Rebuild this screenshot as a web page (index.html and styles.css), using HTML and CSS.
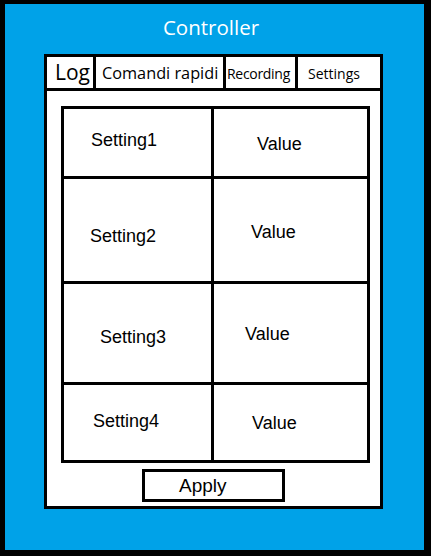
FILE: index.html
```html
<!DOCTYPE html>
<html lang="it">
<head>
  <meta charset="UTF-8" />
  <meta name="viewport" content="width=device-width, initial-scale=1" />
  <title>Controller</title>
  <link rel="stylesheet" href="styles.css">
</head>
<body>

  <div class="frame">
    <h1 class="title">Controller</h1>

    <div class="panel">
      <div class="tabs">
        <div class="tab tab-log">Log</div>
        <div class="tab tab-quick">Comandi rapidi</div>
        <div class="tab tab-rec">Recording</div>
        <div class="tab tab-settings">Settings</div>
      </div>

      <div class="settings-grid">
        <div class="cell c1">Setting1</div>
        <div class="cell c2">Value</div>
        <div class="cell c3">Setting2</div>
        <div class="cell c4">Value</div>
        <div class="cell c5">Setting3</div>
        <div class="cell c6">Value</div>
        <div class="cell c7">Setting4</div>
        <div class="cell c8">Value</div>
      </div>

      <button class="apply">Apply</button>
    </div>
  </div>

</body>
</html>
```

FILE: styles.css
```css
* {
  margin: 0;
  padding: 0;
  box-sizing: border-box;
}

body {
  background: #fff;
}

.frame {
  width: 431px;
  height: 556px;
  background: #00a2e8;
  border-style: solid;
  border-color: #000;
  border-width: 4px 7px 6px 5px;
}

.title {
  height: 50px;
  line-height: 46px;
  padding-right: 7px;
  text-align: center;
  color: #fff;
  font-family: 'Open Sans', sans-serif;
  font-size: 20.5px;
  font-weight: 400;
}

.panel {
  width: 339px;
  height: 455px;
  margin-left: 39px;
  background: #fff;
  border: 3px solid #000;
}

/* tab bar */
.tabs {
  display: flex;
  height: 34px;
  border-bottom: 3px solid #000;
}

.tab {
  height: 31px;
  line-height: 31px;
  border-right: 3px solid #000;
  font-family: 'Open Sans', sans-serif;
  color: #000;
  white-space: nowrap;
  overflow: hidden;
}

.tab-log {
  width: 49px;
  padding-left: 8px;
  font-size: 21px;
}

.tab-quick {
  width: 130px;
  padding-left: 6px;
  padding-top: 1px;
  font-size: 16.3px;
}

.tab-rec {
  width: 72px;
  padding-left: 1px;
  padding-top: 1px;
  font-size: 14px;
  letter-spacing: -0.3px;
}

.tab-settings {
  width: 82px;
  padding-left: 10px;
  padding-top: 1px;
  font-size: 14px;
  border-right: none;
}

/* settings table */
.settings-grid {
  display: grid;
  grid-template-columns: 147px 153px;
  grid-template-rows: 67px 102px 98px 75px;
  gap: 3px;
  padding: 3px;
  width: 309px;
  margin: 15px 0 0 14px;
  background: #000;
}

.cell {
  background: #fff;
  font-family: 'Liberation Sans', Arial, sans-serif;
  font-size: 18px;
  line-height: 20px;
  color: #000;
}

.c1 { padding: 21px 0 0 27px; }
.c2 { padding: 25px 0 0 43px; }
.c3 { padding: 47px 0 0 26px; }
.c4 { padding: 43px 0 0 37px; }
.c5 { padding: 43px 0 0 36px; }
.c6 { padding: 40px 0 0 31px; }
.c7 { padding: 26px 0 0 29px; }
.c8 { padding: 28px 0 0 38px; }

.apply {
  display: block;
  width: 143px;
  height: 33px;
  margin: 6px 0 0 95px;
  padding-left: 34px;
  text-align: left;
  background: #fff;
  border: 3px solid #000;
  font-family: 'Liberation Sans', Arial, sans-serif;
  font-size: 19px;
  line-height: 25px;
  color: #000;
}
```
